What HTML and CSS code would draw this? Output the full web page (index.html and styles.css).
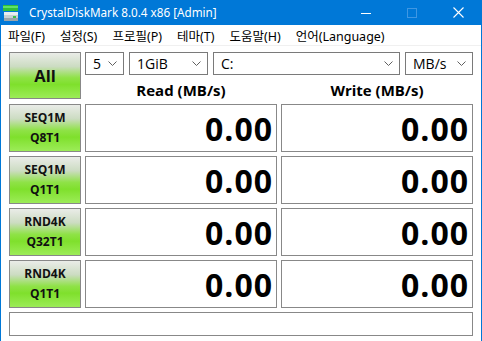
FILE: index.html
```html
<!DOCTYPE html>
<html lang="ko">
<head>
<meta charset="utf-8">
<title>CrystalDiskMark 8.0.4 x86 [Admin]</title>
<link rel="stylesheet" href="styles.css">
</head>
<body>
<div class="window">
  <div class="titlebar">
    <svg class="app-icon" width="16" height="17" viewBox="0 0 16 17">
      <rect x="0" y="0" width="15" height="6" fill="#2fbf3a"/>
      <rect x="0" y="1" width="15" height="2" fill="#5fe06a"/>
      <rect x="1" y="7" width="14" height="9" fill="#c8d0d4"/>
      <rect x="1" y="7" width="14" height="3" fill="#e8eef0"/>
      <rect x="1" y="13" width="14" height="3" fill="#9aa4aa"/>
      <rect x="10" y="11" width="3" height="2" fill="#3ac24a"/>
    </svg>
    <span class="title">CrystalDiskMark 8.0.4 x86 [Admin]</span>
    <span class="spacer"></span>
    <span class="cap-btn">
      <svg width="10" height="10" viewBox="0 0 10 10"><line x1="0" y1="5.5" x2="10" y2="5.5" stroke="#fff" stroke-width="1"/></svg>
    </span>
    <span class="cap-btn">
      <svg width="10" height="10" viewBox="0 0 10 10"><rect x="0.5" y="0.5" width="9" height="9" fill="none" stroke="#3f97e3" stroke-width="1"/></svg>
    </span>
    <span class="cap-btn">
      <svg width="11" height="11" viewBox="0 0 11 11"><path d="M0.5 0.5 L10.5 10.5 M10.5 0.5 L0.5 10.5" stroke="#fff" stroke-width="1.1"/></svg>
    </span>
  </div>
  <div class="menubar">
    <span class="menu-item">파일(F)</span>
    <span class="menu-item">설정(S)</span>
    <span class="menu-item">프로필(P)</span>
    <span class="menu-item">테마(T)</span>
    <span class="menu-item">도움말(H)</span>
    <span class="menu-item">언어(Language)</span>
  </div>
  <div class="content">
    <div class="grid">
      <div class="btn btn-all">All</div>
      <div class="header">
        <div class="combos">
          <div class="combo c-count"><span>5</span><svg class="chev" width="9" height="5" viewBox="0 0 9 5"><path d="M0.5 0.5 L4.5 4.5 L8.5 0.5" fill="none" stroke="#606060"/></svg></div>
          <div class="combo c-size"><span>1GiB</span><svg class="chev" width="9" height="5" viewBox="0 0 9 5"><path d="M0.5 0.5 L4.5 4.5 L8.5 0.5" fill="none" stroke="#606060"/></svg></div>
          <div class="combo c-drive"><span>C:</span><svg class="chev" width="9" height="5" viewBox="0 0 9 5"><path d="M0.5 0.5 L4.5 4.5 L8.5 0.5" fill="none" stroke="#606060"/></svg></div>
          <div class="combo c-unit"><span>MB/s</span><svg class="chev" width="9" height="5" viewBox="0 0 9 5"><path d="M0.5 0.5 L4.5 4.5 L8.5 0.5" fill="none" stroke="#606060"/></svg></div>
        </div>
        <div class="labels">
          <div class="col-label">Read (MB/s)</div>
          <div class="col-label">Write (MB/s)</div>
        </div>
      </div>

      <div class="btn"><span>SEQ1M</span><span>Q8T1</span></div>
      <div class="value">0.00</div>
      <div class="value">0.00</div>

      <div class="btn"><span>SEQ1M</span><span>Q1T1</span></div>
      <div class="value">0.00</div>
      <div class="value">0.00</div>

      <div class="btn"><span>RND4K</span><span>Q32T1</span></div>
      <div class="value">0.00</div>
      <div class="value">0.00</div>

      <div class="btn"><span>RND4K</span><span>Q1T1</span></div>
      <div class="value">0.00</div>
      <div class="value">0.00</div>

      <div class="status"></div>
    </div>
  </div>
</div>
</body>
</html>
```

FILE: styles.css
```css
* { box-sizing: border-box; }
html, body {
  margin: 0;
  padding: 0;
  width: 482px;
  height: 341px;
  overflow: hidden;
  background: #0078d7;
}
body {
  padding: 0 1px;
  font-family: "Noto Sans", "Noto Sans CJK KR", sans-serif;
}
.window {
  width: 480px;
  height: 341px;
  background: #ffffff;
}
.titlebar {
  height: 25px;
  background: #0078d7;
  display: flex;
  align-items: center;
  color: #ffffff;
}
.app-icon {
  margin-left: 2px;
  margin-top: 1px;
}
.title {
  margin-left: 10px;
  font-size: 11.7px;
  line-height: 25px;
  white-space: nowrap;
}
.spacer { flex: 1; }
.cap-btn {
  width: 46px;
  height: 25px;
  display: flex;
  align-items: center;
  justify-content: center;
}
.menubar {
  height: 21px;
  display: flex;
  align-items: center;
  padding-left: 7px;
  font-family: "Noto Sans", "Noto Sans CJK KR", sans-serif;
  font-size: 12.5px;
  color: #000;
  border-bottom: 1px solid #f0f0f0;
}
.menu-item {
  margin-right: 15px;
  white-space: nowrap;
}
.content {
  padding: 6px 8px 0 8px;
}
.grid {
  display: grid;
  grid-template-columns: 72px 192px 192px;
  grid-template-rows: 48px 48px 48px 48px 48px 24px;
  column-gap: 4px;
  row-gap: 4px;
}
.btn {
  border: 1px solid #888888;
  background: linear-gradient(to bottom, #eaece8 0%, #ccdcc2 30%, #8fe247 55%, #7fe02c 70%, #9cec58 100%);
  display: flex;
  flex-direction: column;
  align-items: center;
  justify-content: center;
  font-family: "Open Sans", "Noto Sans", sans-serif;
  font-weight: 700;
  font-size: 12px;
  line-height: 20px;
  color: #111;
}
.btn-all {
  font-size: 16.5px;
  height: 47px;
}
.header {
  grid-column: 2 / 4;
  display: flex;
  flex-direction: column;
}
.combos {
  display: flex;
  gap: 5px;
  height: 24px;
}
.combo {
  border: 1px solid #7a7a7a;
  background: #fff;
  display: flex;
  align-items: center;
  justify-content: space-between;
  padding: 0 6px 0 7px;
  font-family: "Open Sans", "Noto Sans", sans-serif;
  font-size: 14px;
  color: #000;
}
.c-count { width: 39px; }
.c-size { width: 79px; }
.c-drive { width: 187px; }
.c-unit { width: 68px; }
.chev { flex: none; }
.labels {
  display: grid;
  grid-template-columns: 192px 192px;
  column-gap: 4px;
  flex: 1;
}
.col-label {
  text-align: center;
  font-family: "Open Sans", "Noto Sans", sans-serif;
  font-weight: 700;
  font-size: 15px;
  line-height: 20px;
  padding-top: 5px;
  color: #000;
}
.value {
  border: 1px solid #888888;
  background: #fff;
  display: flex;
  align-items: center;
  justify-content: flex-end;
  padding-right: 3px;
  font-family: "Open Sans", "Noto Sans", sans-serif;
  font-weight: 700;
  font-size: 32px;
  letter-spacing: 1px;
  color: #000;
}
.status {
  grid-column: 1 / 4;
  border: 1px solid #888888;
  background: #fff;
}
```
